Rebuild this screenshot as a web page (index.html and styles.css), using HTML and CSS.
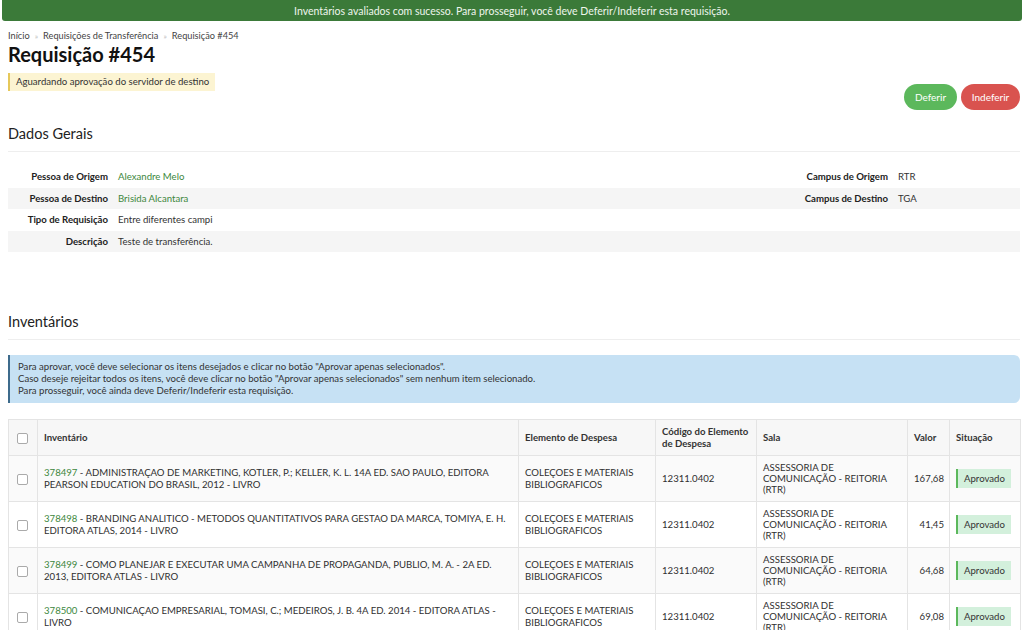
FILE: index.html
```html
<!DOCTYPE html>
<html lang="pt-BR">
<head>
<meta charset="utf-8">
<title>Requisição #454</title>
<link rel="stylesheet" href="styles.css">
</head>
<body>
<div class="flash">Inventários avaliados com sucesso. Para prosseguir, você deve Deferir/Indeferir esta requisição.</div>
<main class="page">
  <header class="head">
    <div class="head-main">
      <nav class="crumbs"><a>Início</a><span class="sep">»</span><a>Requisições de Transferência</a><span class="sep">»</span><span>Requisição #454</span></nav>
      <h1 class="title">Requisição #454</h1>
      <div class="status">Aguardando aprovação do servidor de destino</div>
    </div>
    <div class="actions">
      <button class="btn btn-ok">Deferir</button>
      <button class="btn btn-no">Indeferir</button>
    </div>
  </header>

  <section class="box">
    <h3 class="box-title">Dados Gerais</h3>
    <table class="info">
      <colgroup><col class="c-l1"><col class="c-v1"><col class="c-l2"><col class="c-v2"></colgroup>
      <tr><th>Pessoa de Origem</th><td><a class="lnk">Alexandre Melo</a></td><th>Campus de Origem</th><td>RTR</td></tr>
      <tr><th>Pessoa de Destino</th><td><a class="lnk">Brisida Alcantara</a></td><th>Campus de Destino</th><td>TGA</td></tr>
      <tr><th>Tipo de Requisição</th><td>Entre diferentes campi</td><th></th><td></td></tr>
      <tr><th>Descrição</th><td>Teste de transferência.</td><th></th><td></td></tr>
    </table>
  </section>

  <section class="box inv">
    <h3 class="box-title">Inventários</h3>
    <div class="alert">Para aprovar, você deve selecionar os itens desejados e clicar no botão "Aprovar apenas selecionados".<br>Caso deseje rejeitar todos os itens, você deve clicar no botão "Aprovar apenas selecionados" sem nenhum item selecionado.<br>Para prosseguir, você ainda deve Deferir/Indeferir esta requisição.</div>
    <table class="grid">
      <colgroup><col class="g-ck"><col class="g-inv"><col class="g-el"><col class="g-cod"><col class="g-sala"><col class="g-val"><col class="g-sit"></colgroup>
      <thead>
        <tr><th><input type="checkbox" class="ck"></th><th>Inventário</th><th>Elemento de Despesa</th><th>Código do Elemento de Despesa</th><th>Sala</th><th>Valor</th><th>Situação</th></tr>
      </thead>
      <tbody>
        <tr><td><input type="checkbox" class="ck"></td><td><a class="lnk">378497</a> - ADMINISTRAÇAO DE MARKETING, KOTLER, P.; KELLER, K. L. 14A ED. SAO PAULO, EDITORA PEARSON EDUCATION DO BRASIL, 2012 - LIVRO</td><td>COLEÇOES E MATERIAIS BIBLIOGRAFICOS</td><td>12311.0402</td><td>ASSESSORIA DE COMUNICAÇÃO - REITORIA (RTR)</td><td class="num">167,68</td><td><span class="tag">Aprovado</span></td></tr>
        <tr><td><input type="checkbox" class="ck"></td><td><a class="lnk">378498</a> - BRANDING ANALITICO - METODOS QUANTITATIVOS PARA GESTAO DA MARCA, TOMIYA, E. H. EDITORA ATLAS, 2014 - LIVRO</td><td>COLEÇOES E MATERIAIS BIBLIOGRAFICOS</td><td>12311.0402</td><td>ASSESSORIA DE COMUNICAÇÃO - REITORIA (RTR)</td><td class="num">41,45</td><td><span class="tag">Aprovado</span></td></tr>
        <tr><td><input type="checkbox" class="ck"></td><td><a class="lnk">378499</a> - COMO PLANEJAR E EXECUTAR UMA CAMPANHA DE PROPAGANDA, PUBLIO, M. A. - 2A ED. 2013, EDITORA ATLAS - LIVRO</td><td>COLEÇOES E MATERIAIS BIBLIOGRAFICOS</td><td>12311.0402</td><td>ASSESSORIA DE COMUNICAÇÃO - REITORIA (RTR)</td><td class="num">64,68</td><td><span class="tag">Aprovado</span></td></tr>
        <tr><td><input type="checkbox" class="ck"></td><td><a class="lnk">378500</a> - COMUNICAÇAO EMPRESARIAL, TOMASI, C.; MEDEIROS, J. B. 4A ED. 2014 - EDITORA ATLAS - LIVRO</td><td>COLEÇOES E MATERIAIS BIBLIOGRAFICOS</td><td>12311.0402</td><td>ASSESSORIA DE COMUNICAÇÃO - REITORIA (RTR)</td><td class="num">69,08</td><td><span class="tag">Aprovado</span></td></tr>
      </tbody>
    </table>
  </section>
</main>
</body>
</html>
```
FILE: styles.css
```css
* { box-sizing: border-box; }
html, body { margin: 0; padding: 0; background: #fff; }
body {
  font-family: Lato, "Noto Sans", sans-serif;
  font-size: 9.6px;
  color: #2f2f2f;
  overflow: hidden;
}
.flash {
  margin: 0 2px;
  height: 21px;
  line-height: 22px;
  background: #3b7a39;
  color: #eef5ec;
  text-align: center;
  font-size: 10.5px;
  border-radius: 0 0 3px 3px;
}
.page { padding: 0 4px 0 8px; }

.head { display: flex; justify-content: space-between; }
.head-main { padding-top: 9px; padding-bottom: 19px; }
.crumbs { font-size: 9.2px; color: #444; line-height: 12px; }
.crumbs .sep { color: #bbb; margin: 0 5px; font-size: 8px; }
.title { margin: 0; font-size: 20px; line-height: 24px; font-weight: 700; color: #111; }
.status {
  display: inline-block;
  margin-top: 7px;
  padding: 3px 6px 3px 6px;
  line-height: 12px;
  background: #fcf4d2;
  border-left: 2px solid #e6c85a;
  font-size: 9.6px;
  color: #333;
}
.actions { display: flex; gap: 4px; align-self: flex-end; }
.btn {
  height: 26px;
  border: 0;
  border-radius: 13px;
  padding: 0;
  color: #fff;
  font-family: Lato, sans-serif;
  font-size: 10px;
}
.btn-ok { background: #5cb85c; width: 53px; }
.btn-no { background: #d9534f; width: 59px; }

.box-title {
  margin: 0;
  padding: 16px 0 9px;
  font-size: 14.5px;
  line-height: 16px;
  font-weight: 400;
  color: #222;
  border-bottom: 1px solid #eee;
}
.info {
  margin-top: 14px;
  width: 100%;
  border-collapse: collapse;
  table-layout: fixed;
}
.c-l1 { width: 105px; }
.c-v1 { width: auto; }
.c-l2 { width: 180px; }
.c-v2 { width: 127px; }
.info tr { height: 21.6px; }
.info tr:nth-child(even) { background: #f5f5f5; }
.info th {
  text-align: right;
  font-weight: 700;
  color: #222;
  padding: 0 5px 0 0;
}
.info td { padding: 0 0 0 5px; color: #333; }
.lnk { color: #3d873c; text-decoration: none; }

.inv { margin-top: 47px; }
.inv .box-title { padding-top: 15px; }
.alert {
  margin-top: 15px;
  padding: 6px 8px 7px;
  line-height: 11.6px;
  background: #c6e1f4;
  border-left: 2px solid #3e6b8c;
  border-radius: 0 6px 6px 0;
  color: #333;
}
.grid {
  margin-top: 16px;
  width: 100%;
  border-collapse: collapse;
  table-layout: fixed;
  border: 1px solid #ddd;
}
.g-ck { width: 29px; }
.g-inv { width: 481px; }
.g-el { width: 137px; }
.g-cod { width: 101px; }
.g-sala { width: 151px; }
.g-val { width: 42px; }
.g-sit { width: 71px; }
.grid th, .grid td {
  border: 1px solid #e4e4e4;
  padding: 5px 6px 5px 6px;
  text-align: left;
  vertical-align: middle;
  line-height: 11.4px;
}
.grid thead th { background: #f7f7f7; font-weight: 700; color: #333; height: 36px; }
.grid tbody td { height: 46px; }
.grid tbody tr:nth-child(odd) { background: #fafafa; }
.grid th:first-child, .grid td:first-child { padding: 0 0 0 8px; }
.grid .num { text-align: right; padding-right: 5px; }
.ck {
  appearance: none;
  -webkit-appearance: none;
  width: 11px;
  height: 11px;
  margin: 0;
  border: 1px solid #aaa;
  border-radius: 2px;
  background: #fff;
  vertical-align: middle;
}
.tag {
  display: inline-block;
  padding: 4px 6px;
  line-height: 11px;
  background: #d3f0dc;
  border-left: 2px solid #5cb85c;
  color: #333;
}
```
